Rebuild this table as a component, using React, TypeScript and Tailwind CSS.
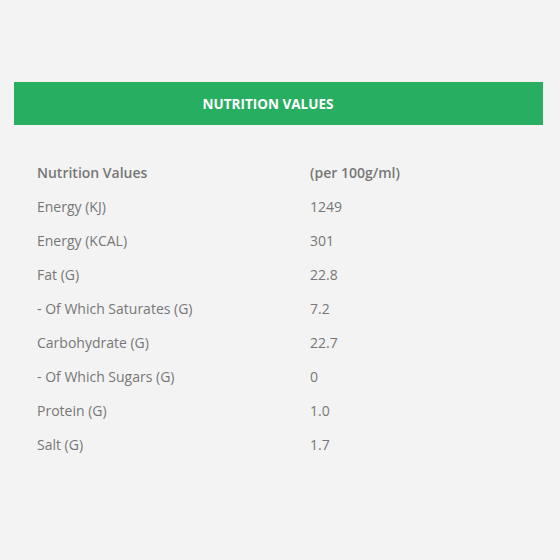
const rows: [string, string][] = [
  ["Energy (KJ)", "1249"],
  ["Energy (KCAL)", "301"],
  ["Fat (G)", "22.8"],
  ["- Of Which Saturates (G)", "7.2"],
  ["Carbohydrate (G)", "22.7"],
  ["- Of Which Sugars (G)", "0"],
  ["Protein (G)", "1.0"],
  ["Salt (G)", "1.7"],
];

export default function App() {
  return (
    <div className="min-h-[560px] bg-[#f3f3f3] pl-[14px] pr-[17px] pt-[82px] font-['Open_Sans',sans-serif] text-[14px] text-[#777777]">
      <div className="flex h-[43px] items-center justify-center bg-[#27ae60] pr-[21px] pt-[1px] text-[13.5px] font-bold uppercase text-white">
        Nutrition Values
      </div>
      <div className="mt-[30px] pl-[23px]">
        <div className="flex h-[34px] items-center font-semibold">
          <div className="w-[273px]">Nutrition Values</div>
          <div>(per 100g/ml)</div>
        </div>
        {rows.map(([label, value]) => (
          <div key={label} className="flex h-[34px] items-center">
            <div className="w-[273px]">{label}</div>
            <div>{value}</div>
          </div>
        ))}
      </div>
    </div>
  );
}
